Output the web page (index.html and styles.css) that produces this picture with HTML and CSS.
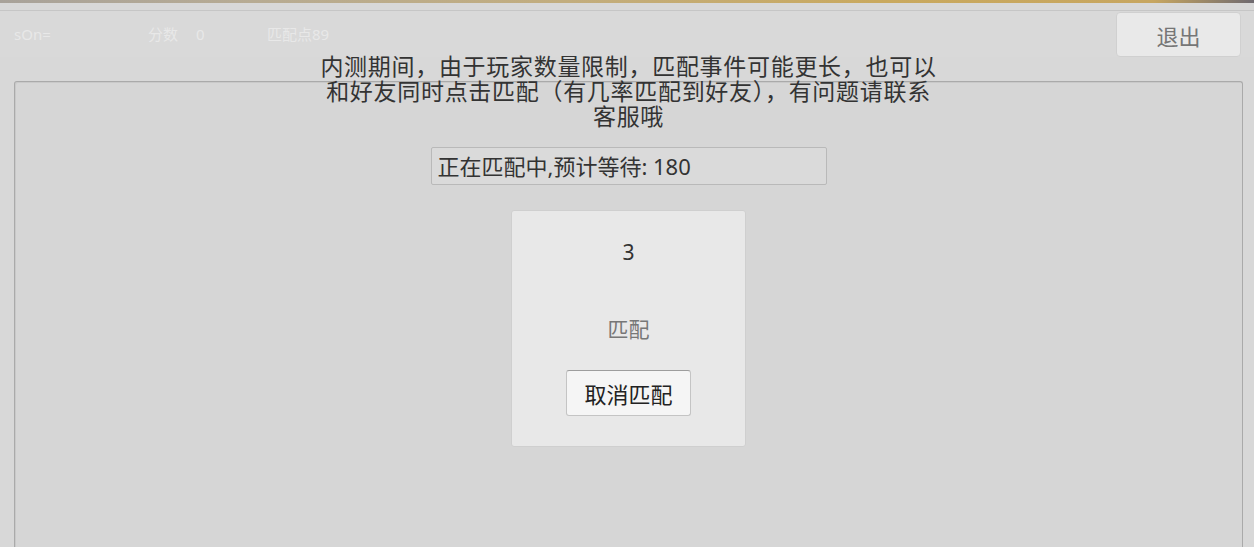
FILE: index.html
```html
<!DOCTYPE html>
<html lang="zh-CN">
<head>
  <meta charset="UTF-8">
  <meta name="viewport" content="width=device-width, initial-scale=1.0">
  <title>匹配</title>
  <link rel="stylesheet" href="styles.css">
</head>
<body>
  <div class="strip"></div>

  <header class="topbar">
    <div class="stats">
      <span class="stat stat-name">sOn=</span>
      <span class="stat stat-score">分数<span class="num">0</span></span>
      <span class="stat stat-points">匹配点89</span>
    </div>
    <button class="exit-btn" type="button">退出</button>
  </header>

  <main class="panel">
    <div class="notice">
      <p>内测期间，由于玩家数量限制，匹配事件可能更长，也可以</p>
      <p>和好友同时点击匹配（有几率匹配到好友），有问题请联系</p>
      <p>客服哦</p>
    </div>

    <div class="status">正在匹配中,预计等待: 180</div>

    <div class="card">
      <div class="count">3</div>
      <div class="card-title">匹配</div>
      <button class="cancel-btn" type="button">取消匹配</button>
    </div>
  </main>
</body>
</html>
```

FILE: styles.css
```css
html, body {
  height: 100%;
}
body {
  margin: 0;
  overflow: hidden;
  font-family: "Noto Sans", "Noto Sans CJK SC", sans-serif;
  background-color: #d8d8d8;
  color: #333;
  display: flex;
  flex-direction: column;
}

.strip {
  height: 3px;
  background: linear-gradient(to right, #a8a29a 0%, #b7ab93 20%, #c2ad7e 45%, #c9a95f 70%, #c7a660 92%, #6f6a70 100%);
}

.topbar {
  margin-top: 7px;
  border-top: 1px solid #c6c6c6;
  background-color: #d9d9d9;
  padding: 1px 13px 0 14px;
  display: flex;
  justify-content: space-between;
  align-items: flex-start;
}

.stats {
  display: flex;
  padding-top: 12px;
  font-size: 15px;
  line-height: 20px;
  color: #e8e8e8;
}
.stat-name {
  width: 134px;
}
.stat-score {
  width: 119px;
}
.stat-score .num {
  margin-left: 18px;
}

.exit-btn {
  width: 125px;
  height: 45px;
  background-color: #e9e9e9;
  border: 1px solid #d0d0d0;
  border-radius: 4px;
  font-family: inherit;
  font-size: 22px;
  color: #767676;
  cursor: pointer;
}

.panel {
  flex: 1;
  margin: 24px 11px 0 14px;
  background-color: #d6d6d6;
  border: 1px solid #aaaaaa;
  border-bottom: none;
  border-radius: 3px 3px 0 0;
  box-shadow: inset 1px 1px 0 #c9c9c9;
  display: flex;
  flex-direction: column;
  align-items: center;
}

.notice {
  margin-top: -28px;
  font-size: 23px;
  letter-spacing: 0.7px;
  line-height: 25px;
  text-align: center;
  color: #333;
}
.notice p {
  margin: 0;
  height: 25px;
}

.status {
  margin-top: 18px;
  width: 388px;
  height: 36px;
  padding-left: 6px;
  background-color: #dadada;
  border: 1px solid #b9b9b9;
  border-radius: 2px;
  font-size: 22px;
  line-height: 36px;
  color: #333;
}

.card {
  margin-top: 25px;
  width: 235px;
  height: 237px;
  box-sizing: border-box;
  background-color: #e8e8e8;
  border: 1px solid #cfcfcf;
  border-radius: 3px;
  display: flex;
  flex-direction: column;
  align-items: center;
}

.count {
  margin-top: 27px;
  font-size: 21px;
  line-height: 28px;
  color: #333;
}

.card-title {
  margin-top: 49px;
  font-size: 21px;
  line-height: 28px;
  color: #777;
}

.cancel-btn {
  margin-top: 27px;
  width: 125px;
  height: 46px;
  background-color: #f5f5f5;
  border: 1px solid #c4c4c4;
  border-top-color: #9d9d9d;
  border-radius: 3px;
  font-family: inherit;
  font-size: 22px;
  color: #222;
  cursor: pointer;
}
```
